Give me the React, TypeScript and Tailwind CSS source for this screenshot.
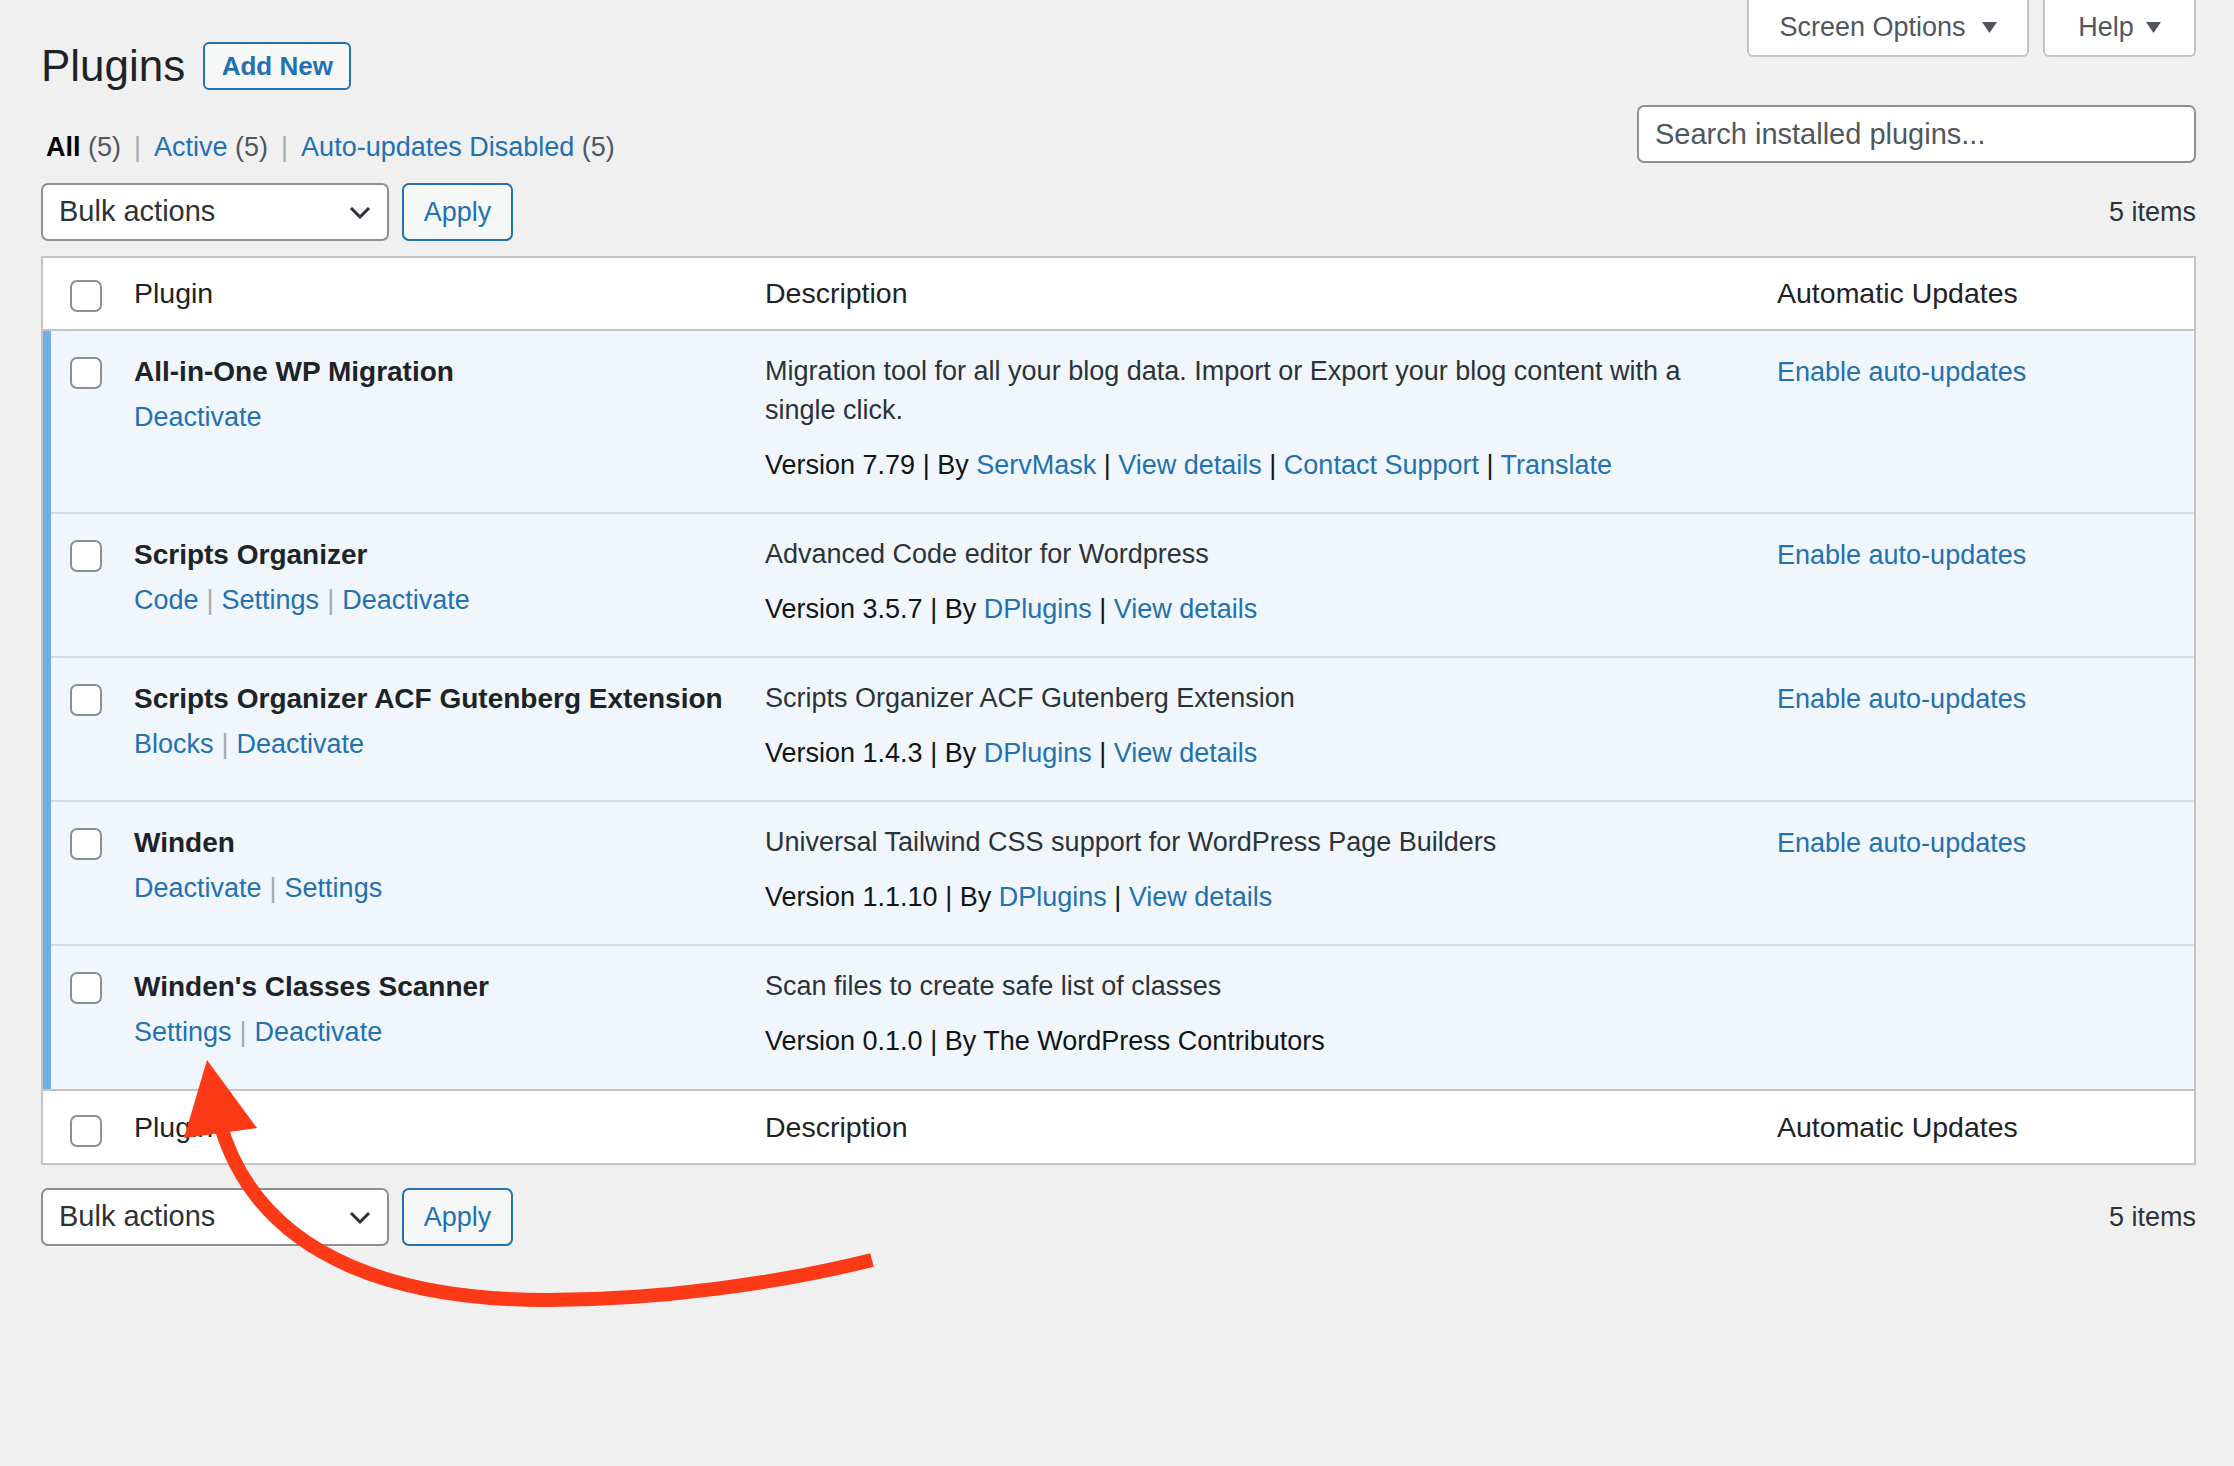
import React from "react";

type Plugin = {
    name: string;
    actions: string[];
    desc: string;
    version: string;
    author: string;
    authorLink: boolean;
    links: string[];
    autoUpdates: boolean;
};

const PLUGINS: Plugin[] = [
    {
        name: "All-in-One WP Migration",
        actions: ["Deactivate"],
        desc: "Migration tool for all your blog data. Import or Export your blog content with a single click.",
        version: "7.79",
        author: "ServMask",
        authorLink: true,
        links: ["View details", "Contact Support", "Translate"],
        autoUpdates: true,
    },
    {
        name: "Scripts Organizer",
        actions: ["Code", "Settings", "Deactivate"],
        desc: "Advanced Code editor for Wordpress",
        version: "3.5.7",
        author: "DPlugins",
        authorLink: true,
        links: ["View details"],
        autoUpdates: true,
    },
    {
        name: "Scripts Organizer ACF Gutenberg Extension",
        actions: ["Blocks", "Deactivate"],
        desc: "Scripts Organizer ACF Gutenberg Extension",
        version: "1.4.3",
        author: "DPlugins",
        authorLink: true,
        links: ["View details"],
        autoUpdates: true,
    },
    {
        name: "Winden",
        actions: ["Deactivate", "Settings"],
        desc: "Universal Tailwind CSS support for WordPress Page Builders",
        version: "1.1.10",
        author: "DPlugins",
        authorLink: true,
        links: ["View details"],
        autoUpdates: true,
    },
    {
        name: "Winden's Classes Scanner",
        actions: ["Settings", "Deactivate"],
        desc: "Scan files to create safe list of classes",
        version: "0.1.0",
        author: "The WordPress Contributors",
        authorLink: false,
        links: [],
        autoUpdates: false,
    },
];

function Checkbox() {
    return (
        <span className="block h-[32px] w-[32px] rounded-[7px] border-2 border-[#8c8f94] bg-white" />
    );
}

function Chevron() {
    return (
        <svg width="22" height="13" viewBox="0 0 22 13" fill="none">
            <path d="M2 2l9 9 9-9" stroke="#2c3338" strokeWidth="3" />
        </svg>
    );
}

function TriangleDown() {
    return (
        <svg width="15" height="11" viewBox="0 0 15 11">
            <path d="M0 0h15L7.5 11z" fill="#50575e" />
        </svg>
    );
}

function TableNav() {
    return (
        <div className="flex items-center justify-between">
            <div className="flex items-center gap-[13px]">
                <div className="flex h-[58px] w-[348px] items-center justify-between rounded-[7px] border-2 border-[#8c8f94] bg-white pl-[16px] pr-[16px] text-[29px] text-[#2c3338]">
                    <span>Bulk actions</span>
                    <Chevron />
                </div>
                <div className="flex h-[58px] w-[111px] items-center justify-center rounded-[7px] border-2 border-[#2271b1] bg-[#f6f7f7] text-[27px] text-[#2271b1]">
                    Apply
                </div>
            </div>
            <span className="text-[27px] text-[#2c3338]">5 items</span>
        </div>
    );
}

function HeadRow({ top }: { top: boolean }) {
    return (
        <div
            className={`flex items-start bg-white text-[28.5px] text-[#1d2327] ${
                top ? "h-[73px] border-b-2 border-[#c3c4c7]" : "h-[74px] border-t-2 border-[#c3c4c7]"
            }`}>
            <div className={`w-[71px] shrink-0 pl-[27px] ${top ? "pt-[22px]" : "pt-[24px]"}`}>
                <Checkbox />
            </div>
            <div className="w-[631px] shrink-0 self-center pl-[20px]">Plugin</div>
            <div className="w-[1012px] shrink-0 self-center pl-[20px]">Description</div>
            <div className="flex-1 self-center pl-[20px]">Automatic Updates</div>
        </div>
    );
}

function PluginRow({ plugin, last }: { plugin: Plugin; last: boolean }) {
    return (
        <div className="flex border-l-[8px] border-[#72aee6] bg-[#f0f6fc]">
            <div className={`flex flex-1 ${last ? "" : "border-b-2 border-[#d8dde2]"}`}>
                <div className="w-[63px] shrink-0 pl-[19px] pt-[26px]">
                    <Checkbox />
                </div>
                <div className="w-[631px] shrink-0 px-[20px] pt-[21px]">
                    <div className="whitespace-nowrap text-[28px] font-bold leading-[40px] text-[#1d2327]">
                        {plugin.name}
                    </div>
                    <div className="mt-[6px] text-[27px] leading-[38px] text-[#2271b1]">
                        {plugin.actions.map((action, i) => (
                            <React.Fragment key={action}>
                                {i > 0 && <span className="mx-[8px] text-[#a7aaad]">|</span>}
                                <span>{action}</span>
                            </React.Fragment>
                        ))}
                    </div>
                </div>
                <div className={`w-[1012px] shrink-0 px-[20px] pt-[21px] ${last ? "pb-[28px]" : "pb-[27px]"}`}>
                    <p className="text-[27px] leading-[39px] text-[#2c3338]">{plugin.desc}</p>
                    <p className="mt-[16px] text-[27px] leading-[39px] text-[#101517]">
                        Version {plugin.version} | By{" "}
                        {plugin.authorLink ? (
                            <span className="text-[#2271b1]">{plugin.author}</span>
                        ) : (
                            plugin.author
                        )}
                        {plugin.links.map((link) => (
                            <React.Fragment key={link}>
                                {" | "}
                                <span className="text-[#2271b1]">{link}</span>
                            </React.Fragment>
                        ))}
                    </p>
                </div>
                <div className="flex-1 px-[20px] pt-[21px]">
                    {plugin.autoUpdates && (
                        <div className="text-[27px] leading-[40px] text-[#2271b1]">Enable auto-updates</div>
                    )}
                </div>
            </div>
        </div>
    );
}

export default function App() {
    return (
        <div className="relative min-h-[1466px] bg-[#f0f0f1] pl-[41px] pr-[38px] font-['Liberation_Sans',Arial,sans-serif] text-[#2c3338]">
            {/* Header area */}
            <div className="flex items-start justify-between">
                <div>
                    <div className="mt-[42px] flex h-[48px] items-center">
                        <h1 className="text-[44px] leading-[48px] text-[#1d2327]">Plugins</h1>
                        <div className="ml-[18px] flex h-[48px] w-[148px] items-center justify-center rounded-[6px] border-2 border-[#2271b1] bg-[#f6f7f7] text-[26px] font-bold text-[#2271b1]">
                            Add New
                        </div>
                    </div>
                    <div className="ml-[5px] mt-[38px] text-[27px] leading-[38px]">
                        <b className="text-black">All</b> <span className="text-[#50575e]">(5)</span>
                        <span className="mx-[13px] text-[#a7aaad]">|</span>
                        <span className="text-[#2271b1]">Active</span> <span className="text-[#50575e]">(5)</span>
                        <span className="mx-[13px] text-[#a7aaad]">|</span>
                        <span className="text-[#2271b1]">Auto-updates Disabled</span>{" "}
                        <span className="text-[#50575e]">(5)</span>
                    </div>
                </div>
                <div className="w-[559px]">
                    <div className="flex h-[57px] justify-end gap-[14px]">
                        <div className="flex w-[282px] items-center justify-center gap-[16px] rounded-b-[6px] border-2 border-t-0 border-[#c3c4c7] bg-white text-[27px] text-[#50575e]">
                            Screen Options
                            <TriangleDown />
                        </div>
                        <div className="flex w-[153px] items-center justify-center gap-[12px] rounded-b-[6px] border-2 border-t-0 border-[#c3c4c7] bg-white text-[27px] text-[#50575e]">
                            Help
                            <TriangleDown />
                        </div>
                    </div>
                    <input
                        className="mt-[48px] h-[58px] w-full rounded-[7px] border-2 border-[#8c8f94] bg-white px-[16px] text-[29px] text-[#2c3338] outline-none placeholder:text-[#50575e]"
                        placeholder="Search installed plugins..."
                    />
                </div>
            </div>

            <div className="mt-[17px]">
                <TableNav />
            </div>

            {/* Plugins table */}
            <div className="mt-[15px] border-2 border-[#c3c4c7] bg-white">
                <HeadRow top />
                {PLUGINS.map((plugin, i) => (
                    <PluginRow key={plugin.name} plugin={plugin} last={i === PLUGINS.length - 1} />
                ))}
                <HeadRow top={false} />
            </div>

            <div className="mt-[23px]">
                <TableNav />
            </div>

            {/* Annotation arrow */}
            <svg className="pointer-events-none absolute left-0 top-0" width="2234" height="1466">
                <path
                    d="M872 1260 C780 1283 660 1300 547 1300 C420 1300 260 1270 219 1120"
                    stroke="#fd3a17"
                    strokeWidth="14"
                    fill="none"
                />
                <polygon points="207,1060 257,1128 184,1138" fill="#fd3a17" />
            </svg>
        </div>
    );
}
